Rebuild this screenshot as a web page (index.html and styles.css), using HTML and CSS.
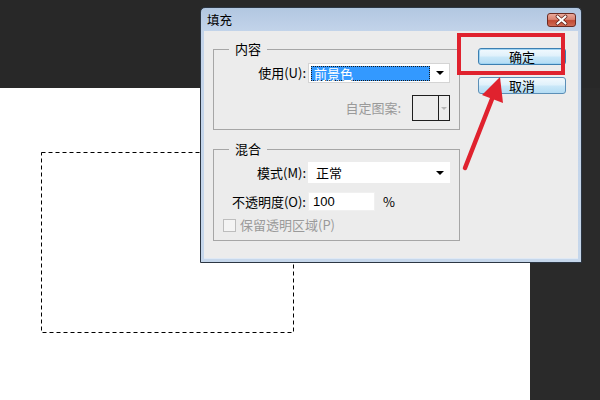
FILE: index.html
```html
<!DOCTYPE html>
<html lang="zh-CN">
<head>
<meta charset="utf-8">
<title>填充</title>
<link rel="stylesheet" href="styles.css">
</head>
<body>
<div class="screen">
  <div class="topband"></div>
  <div class="workarea">
    <div class="canvas">
      <svg class="selection" width="254" height="182" viewBox="0 0 254 182">
        <rect x="0.5" y="0.5" width="252" height="180" fill="none" stroke="#000" stroke-width="1" stroke-dasharray="4 3"/>
      </svg>
    </div>
    <div class="pasteboard"></div>
  </div>
</div>

<div class="dialog">
  <div class="titlebar">
    <span class="title">填充</span>
    <span class="close">
      <svg width="29" height="14" viewBox="0 0 29 14">
        <path d="M10.5 3.5 L18.5 10.5 M18.5 3.5 L10.5 10.5" stroke="#5a1c14" stroke-width="3.6" stroke-linecap="round"/>
        <path d="M10.5 3.5 L18.5 10.5 M18.5 3.5 L10.5 10.5" stroke="#fff" stroke-width="2.2" stroke-linecap="round"/>
      </svg>
    </span>
  </div>
  <div class="dlgbody">
    <div class="groups">
      <fieldset class="group">
        <legend>内容</legend>
        <div class="row row-use">
          <span class="label">使用(U):</span>
          <div class="select">
            <span class="sel-hl">前景色</span>
            <span class="caret"></span>
          </div>
        </div>
        <div class="row row-pattern">
          <span class="label-dis">自定图案:</span>
          <div class="pattern">
            <span class="pat-swatch"></span>
            <span class="pat-btn"><span class="caret caret-dis"></span></span>
          </div>
        </div>
      </fieldset>
      <fieldset class="group group-blend">
        <legend>混合</legend>
        <div class="row row-mode">
          <span class="label">模式(M):</span>
          <div class="select select-mode">
            <span class="sel-text">正常</span>
            <span class="caret"></span>
          </div>
        </div>
        <div class="row row-opacity">
          <span class="label">不透明度(O):</span>
          <div class="input">100</div>
          <span class="unit">%</span>
        </div>
        <div class="row row-check">
          <span class="checkbox"></span>
          <span class="label-dis">保留透明区域(P)</span>
        </div>
      </fieldset>
    </div>
    <div class="buttons">
      <div class="btn btn-default">确定</div>
      <div class="btn">取消</div>
    </div>
  </div>
</div>

<svg class="annotation" width="600" height="400" viewBox="0 0 600 400">
  <rect x="459" y="35" width="104" height="38" fill="none" stroke="#e0222e" stroke-width="4"/>
  <line x1="465" y1="168" x2="492" y2="99" stroke="#e0222e" stroke-width="4.5" stroke-linecap="round"/>
  <polygon points="500,77 503,103 482,95" fill="#e0222e"/>
</svg>
</body>
</html>
```

FILE: styles.css
```css
html, body {
  margin: 0;
  padding: 0;
}

body {
  width: 600px;
  height: 400px;
  overflow: hidden;
  position: relative;
  background: #282828;
  font-family: "Noto Sans CJK SC", "Liberation Sans", sans-serif;
  font-size: 13px;
  color: #000;
}

.screen {
  display: flex;
  flex-direction: column;
  height: 400px;
}

.topband {
  height: 88px;
  background: #282828;
}

.workarea {
  flex: 1;
  display: flex;
}

.canvas {
  width: 530px;
  background: #ffffff;
  position: relative;
}

.selection {
  position: absolute;
  left: 41px;
  top: 64px;
  display: block;
}

.pasteboard {
  flex: 1;
  background: #2a2a2a;
}

/* dialog */
.dialog {
  position: absolute;
  left: 200px;
  top: 7px;
  width: 382px;
  height: 256px;
  box-sizing: border-box;
  border: 1px solid #2c3643;
  border-radius: 5px 5px 0 0;
  background: linear-gradient(#b2c7e1 0px, #c3d4ea 24px, #c6d7eb 100%);
  display: flex;
  flex-direction: column;
}

.titlebar {
  height: 23px;
  display: flex;
  align-items: center;
  justify-content: space-between;
  padding: 0 5px 0 6px;
  line-height: 16px;
}

.title {
  color: #000;
  font-size: 12.5px;
}

.close {
  width: 29px;
  height: 14px;
  box-sizing: border-box;
  border: 1px solid #6b2b22;
  border-radius: 3px;
  background: linear-gradient(#eaa99a 0%, #d98371 45%, #c24a33 55%, #cf6b55 100%);
  display: flex;
  align-items: center;
  justify-content: center;
  overflow: hidden;
}

.close svg {
  display: block;
  flex: none;
}

.dlgbody {
  flex: 1;
  margin: 0 3px 3px;
  background: #ececec;
  display: flex;
  padding: 10px 0 0 9px;
  border-bottom: 1px solid #dfe9f5;
}

.groups {
  width: 247px;
  display: flex;
  flex-direction: column;
}

.group {
  margin: 0;
  padding: 0 0 8px 0;
  border: 1px solid #a6a6a6;
  min-width: 0;
}

.group legend {
  margin-left: 15px;
  padding: 0 6px;
  line-height: 16px;
  height: 16px;
}

.group-blend {
  margin-top: 11px;
  padding-bottom: 6px;
}

.row {
  display: flex;
  align-items: center;
}

.label {
  width: 92px;
  margin-right: 2px;
  text-align: right;
  white-space: nowrap;
  line-height: 16px;
}

.label-dis {
  color: #9a9a9a;
  white-space: nowrap;
  line-height: 16px;
}

.row-use {
  margin-top: 6px;
  height: 20px;
}

.select {
  width: 142px;
  height: 20px;
  box-sizing: border-box;
  background: #fff;
  border: 1px solid #d4d4d4;
  display: flex;
  align-items: center;
  padding-left: 2px;
}

.sel-hl {
  width: 119px;
  height: 15px;
  box-sizing: border-box;
  background: #3399ff;
  color: #fff;
  border: 1px dotted #1a1a1a;
  line-height: 13px;
  padding-left: 2px;
  font-size: 13px;
  white-space: nowrap;
}

.caret {
  display: block;
  width: 0;
  height: 0;
  border-left: 4px solid transparent;
  border-right: 4px solid transparent;
  border-top: 4px solid #000;
  margin-left: auto;
  margin-right: 5px;
}

.caret-dis {
  border-left-width: 3px;
  border-right-width: 3px;
  border-top: 3px solid #b5b5b5;
  margin: 0 auto;
}

.row-pattern {
  margin-top: 12px;
  height: 26px;
  justify-content: flex-end;
  padding-right: 9px;
}

.row-pattern .label-dis {
  margin-right: 11px;
}

.pattern {
  width: 38px;
  height: 26px;
  box-sizing: border-box;
  border: 1px solid #1e1e1e;
  display: flex;
  background: #ececec;
}

.pat-swatch {
  width: 25px;
  border-right: 1px solid #1e1e1e;
}

.pat-btn {
  flex: 1;
  display: flex;
  align-items: center;
}

.row-mode {
  margin-top: 5px;
  height: 21px;
}

.select-mode {
  height: 21px;
  border-color: #ffffff;
  padding-left: 7px;
}

.sel-text {
  line-height: 16px;
}

.row-opacity {
  margin-top: 9px;
  height: 19px;
}

.input {
  width: 67px;
  height: 19px;
  box-sizing: border-box;
  background: #fff;
  border: 1px solid #f0f0f0;
  padding-left: 4px;
  line-height: 17px;
  font-family: "Liberation Sans", "Noto Sans CJK SC", sans-serif;
  font-size: 13px;
}

.unit {
  margin-left: 8px;
  line-height: 16px;
}

.row-check {
  margin-top: 5px;
  height: 18px;
  padding-left: 9px;
}

.checkbox {
  width: 13px;
  height: 13px;
  box-sizing: border-box;
  border: 1px solid #bdbdbd;
  background: #f4f4f4;
  margin-right: 4px;
}

.buttons {
  margin-left: 18px;
  padding-top: 7px;
  display: flex;
  flex-direction: column;
  gap: 12px;
}

.btn {
  width: 88px;
  height: 17px;
  box-sizing: border-box;
  border: 1px solid #5b8fb7;
  border-radius: 3px;
  background: linear-gradient(#f2f9fe 0%, #e0f1fb 45%, #c9e7f8 55%, #b3dcf4 100%);
  display: flex;
  align-items: center;
  justify-content: center;
  line-height: 14px;
}

.btn-default {
  border-color: #3c7fb1;
  box-shadow: inset 0 0 0 1px #9fd3f2;
}

.annotation {
  position: absolute;
  left: 0;
  top: 0;
  pointer-events: none;
}
```
